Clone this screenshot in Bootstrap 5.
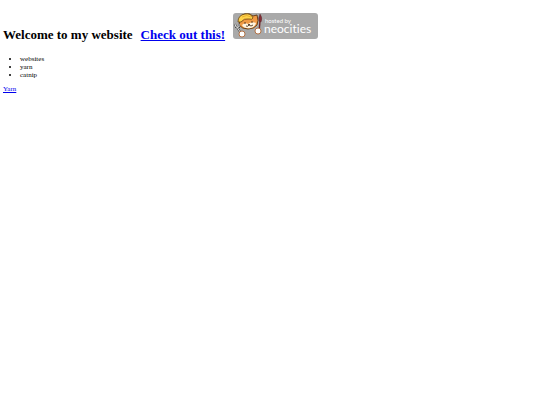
<!DOCTYPE html>
<html lang="en">
<head>
<meta charset="utf-8">
<meta name="viewport" content="width=device-width, initial-scale=1">
<title>My website</title>
<link href="https://cdn.jsdelivr.net/npm/bootstrap@5.3.0/dist/css/bootstrap.min.css" rel="stylesheet">
<style>
body { font: 7px/8px "Liberation Serif", "Times New Roman", serif; color: #000; background: #fff; padding: 13px 3px; }
a { color: #0000ee; }
h1.site-title { font-size: 13px; line-height: 16px; font-weight: 700; margin-bottom: 12px; column-gap: 8px; }
.topics { padding-left: 17px; margin-bottom: 6px; }
.host-logo { width: 85px; height: 26px; }
.host-logo text { font-family: Lato, "Open Sans", sans-serif; font-weight: 400; font-variant-ligatures: none; fill: #fff; }
</style>
<script src="https://cdn.jsdelivr.net/npm/bootstrap@5.3.0/dist/js/bootstrap.bundle.min.js"></script>
</head>
<body>
<main>
  <h1 class="site-title d-flex flex-wrap align-items-baseline">
    <span>Welcome to my website</span>
    <a href="#check">Check out this!</a>
    <a href="#neocities" class="d-block" aria-label="Hosted by Neocities">
      <svg class="host-logo d-block" viewBox="0 0 85 26">
        <rect width="85" height="26" rx="3" fill="#a9a9a9"/>
        <!-- cat face -->
        <path d="M7 7Q7 2 12 1Q17 0 20 3L24 2Q26 8 24 12Q21 16 15 16Q9 16 6 12Z" fill="#f09a45" stroke="#5c3510" stroke-width=".9"/>
        <path d="M9 12Q12 9 15 11Q19 8 23 10Q22 14 18 15Q11 16 9 12Z" fill="#fff4df"/>
        <!-- yellow cap -->
        <path d="M5 9Q5 2 12 1Q18 0 20 5Q19 7 16 6Q11 5 8 9Z" fill="#ffd34c" stroke="#6b4510" stroke-width=".8"/>
        <path d="M9 4Q14 1 18 4" fill="none" stroke="#e3a829" stroke-width=".8"/>
        <path d="M12 9v2M19 8v2M15 11l1 1 1-1M13 13q2 1 3-1q2 2 4 0" fill="none" stroke="#38200e" stroke-width=".8"/>
        <!-- wrench and brush -->
        <path d="M2 11l1 3 3 0 0-3M4 14l5 8" fill="none" stroke="#444" stroke-width="2"/>
        <path d="M2 11l1 3 3 0 0-3M4 14l5 8" fill="none" stroke="#eee" stroke-width=".9"/>
        <path d="M27 8L26 20" stroke="#6d2426" stroke-width="1.400"/>
        <path d="M27 1Q30 5 28 9L26 8Q25 5 27 1Z" fill="#852d35" stroke="#51272b" stroke-width=".4"/>
        <!-- paws -->
        <circle cx="9" cy="21" r="3" fill="#fff" stroke="#a85b24" stroke-width=".8"/>
        <circle cx="25" cy="18" r="3" fill="#fff" stroke="#a85b24" stroke-width=".8"/>
        <text x="32" y="10" font-size="6">hosted by</text>
        <text x="31" y="20" font-size="12">neocities</text>
      </svg>
    </a>
  </h1>
  <ul class="topics">
    <li>websites</li>
    <li>yarn</li>
    <li>catnip</li>
  </ul>
  <a href="#yarn">Yarn</a>
</main>
</body>
</html>
